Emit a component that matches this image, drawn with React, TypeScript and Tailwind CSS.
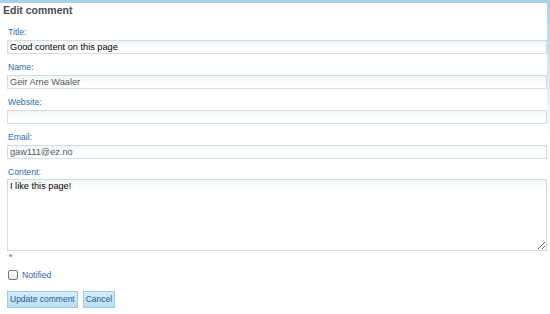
import React from 'react'

const FIELDS = [
  { label: 'Title:', value: 'Good content on this page', color: 'text-black' },
  { label: 'Name:', value: 'Geir Arne Waaler', color: 'text-[#555]' },
  { label: 'Website:', value: '', color: 'text-[#555]' },
  { label: 'Email:', value: 'gaw111@ez.no', color: 'text-[#555]' },
]

const inputCls =
  'block w-full h-[14px] border border-[#dadada] bg-[linear-gradient(to_bottom,#f0f6fa,#ffffff_60%)] px-[2px] text-[9.2px] leading-[12px] outline-none'

const btnCls =
  'h-[17px] px-[2px] border border-[#9ccbe6] bg-[linear-gradient(to_bottom,#d4ebf7,#bcdff2)] text-[8.5px] leading-[15px] text-[#1f5f9c]'

export default function App() {
  return (
    <div className="w-[550px] h-[314px] bg-[linear-gradient(to_bottom,#a7cfe8_0px,#cfe5f3_60px,#ffffff_140px)] pt-[3px] pr-[3px] font-['Liberation_Sans',Arial,sans-serif] overflow-hidden">
      <div className="bg-white h-full">
        <h2 className="pl-[3px] pt-[1px] text-[10.5px] leading-[12px] font-bold text-[#4d4d4d]">Edit comment</h2>

        <div className="pl-[7px] pt-[10px]">
          {FIELDS.map((f) => (
            <div key={f.label} className="mb-[7px]">
              <div className="pl-px text-[8.7px] leading-[12px] text-[#2a6cae] mb-[2px]">{f.label}</div>
              <input readOnly value={f.value} className={`${inputCls} ${f.color}`} />
            </div>
          ))}

          <div>
            <div className="pl-px text-[8.7px] leading-[12px] text-[#2a6cae] mb-px">Content:</div>
            <textarea
              readOnly
              value="I like this page!"
              className="block w-full h-[72px] border border-[#dadada] bg-[linear-gradient(to_bottom,#f0f6fa,#ffffff_8px)] px-[2px] py-0 text-[9.2px] leading-[12px] text-black outline-none resize"
            />
          </div>

          <div className="text-[#e53030] text-[9px] leading-[8px] pl-[2px] pt-[2px]">*</div>

          <label className="flex items-center gap-[4px] mt-[8px] pl-px">
            <span className="w-[10px] h-[10px] rounded-[2px] border border-[#777] bg-[linear-gradient(to_bottom,#ffffff,#e8e8e8)]" />
            <span className="text-[8.7px] leading-[12px] text-[#2a6cae]">Notified</span>
          </label>

          <div className="flex gap-[5px] mt-[10px]">
            <button className={btnCls}>Update comment</button>
            <button className={btnCls}>Cancel</button>
          </div>
        </div>
      </div>
    </div>
  )
}
